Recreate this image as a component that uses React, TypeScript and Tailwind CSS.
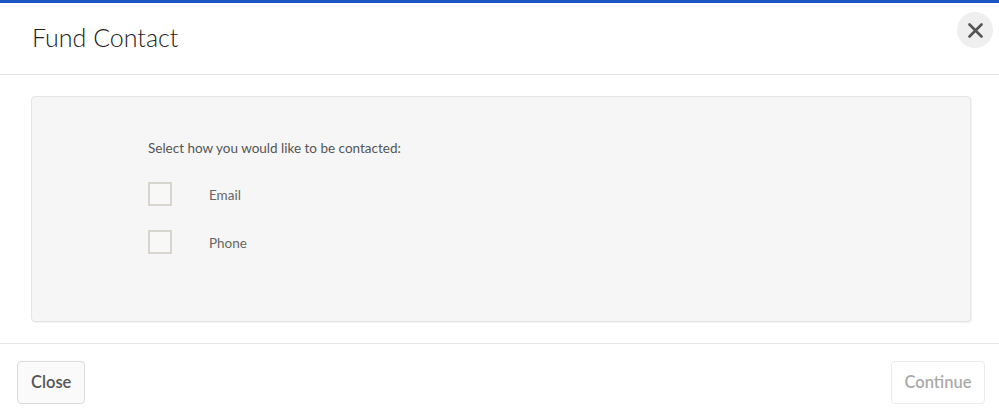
import React from "react";

function Checkbox({ label }: { label: string }) {
  return (
    <label className="flex items-center h-6">
      <span className="w-6 h-6 border-2 border-[#d8d4ce] bg-[#f7f8f7] shrink-0" />
      <span className="ml-[37px] mt-[2px] text-[13.5px] text-[#666]">{label}</span>
    </label>
  );
}

export default function App() {
  return (
    <div className="w-[999px] h-[416px] bg-white font-['Lato',sans-serif] flex flex-col border-t-[3px] border-[#1c55c4]">
      {/* header */}
      <div className="h-[72px] flex items-center justify-between border-b border-[#e6e6e6] pl-8 pr-[6px] relative">
        <h1 className="text-[25px] font-light text-[#222] mt-[-1px]">Fund Contact</h1>
        <button className="absolute right-[6px] top-[9px] w-9 h-9 rounded-full bg-[#efefef] flex items-center justify-center">
          <svg width="15" height="15" viewBox="0 0 15 15">
            <path d="M1.5 1.5 L13.5 13.5 M13.5 1.5 L1.5 13.5" stroke="#555" strokeWidth="2.6" strokeLinecap="round" />
          </svg>
        </button>
      </div>

      {/* body */}
      <div className="pl-[31px] pr-[28px] pt-[21px] pb-[21px] border-b border-[#e6e6e6]">
        <div className="h-[226px] bg-[#f5f6f5] border border-[#e4e5e4] rounded shadow-[1px_1px_1px_rgba(0,0,0,0.06)] pl-[116px] pt-[43px]">
          <p className="text-[13.5px] text-[#555] leading-4">Select how you would like to be contacted:</p>
          <div className="mt-[26px] flex flex-col gap-6">
            <Checkbox label="Email" />
            <Checkbox label="Phone" />
          </div>
        </div>
      </div>

      {/* footer */}
      <div className="flex items-center justify-between px-[17px] pt-[17px]">
        <button className="h-[43px] px-[13px] w-[68px] rounded border border-[#dcdcdc] bg-[#fafafa] text-[16.5px] font-semibold text-[#555]">
          Close
        </button>
        <button className="h-[43px] w-[94px] mr-[-3px] rounded border border-[#ebebeb] bg-white text-[16.5px] font-semibold text-[#aaa]">
          Continue
        </button>
      </div>
    </div>
  );
}
